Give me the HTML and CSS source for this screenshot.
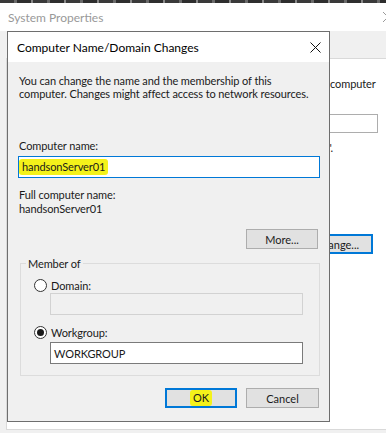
FILE: index.html
```html
<!DOCTYPE html>
<html lang="en">
<head>
  <meta charset="UTF-8">
  <title>Computer Name/Domain Changes</title>
  <link rel="stylesheet" href="styles.css">
</head>
<body>
  <div class="screen">
    <div class="top-strip"></div>

    <!-- background window -->
    <div class="sys-window">
      <div class="sys-titlebar">
        <span class="sys-title">System Properties</span>
        <svg class="sys-close" width="10" height="10" viewBox="0 0 10 10"><path d="M0 0L10 10M10 0L0 10" stroke="#9a9a9a" stroke-width="1"/></svg>
      </div>
      <div class="sys-tabs"></div>
      <div class="sys-panel">
        <p class="sys-text">computer</p>
        <div class="sys-input"></div>
        <p class="sys-note">"Mary's Computer".</p>
        <button class="btn btn-default sys-change">Change...</button>
      </div>
    </div>

    <!-- dialog on top -->
    <div class="dialog">
      <div class="dialog-titlebar">
        <span class="dialog-title">Computer Name/Domain Changes</span>
        <svg class="dialog-close" width="11" height="11" viewBox="0 0 11 11"><path d="M0.5 0.5L10.5 10.5M10.5 0.5L0.5 10.5" stroke="#111" stroke-width="1"/></svg>
      </div>
      <div class="dialog-body">
        <p class="intro">You can change the name and the membership of this computer. Changes might affect access to network resources.</p>

        <label class="field-label">Computer name:</label>
        <div class="textbox textbox-focus"><span class="hl">handsonServer01</span></div>

        <div class="full-name">
          <div>Full computer name:</div>
          <div>handsonServer01</div>
        </div>

        <div class="more-row">
          <button class="btn">More...</button>
        </div>

        <fieldset class="member-group">
          <legend>Member of</legend>
          <div class="radio-row">
            <span class="radio"></span>
            <span>Domain:</span>
          </div>
          <div class="textbox textbox-disabled group-box"></div>
          <div class="radio-row radio-row-2">
            <span class="radio radio-checked"></span>
            <span>Workgroup:</span>
          </div>
          <div class="textbox group-box group-box-2">WORKGROUP</div>
        </fieldset>

        <div class="dialog-buttons">
          <button class="btn btn-default"><span class="hl">OK</span></button>
          <button class="btn btn-cancel">Cancel</button>
        </div>
      </div>
    </div>
  </div>
</body>
</html>
```

FILE: styles.css
```css
* {
  box-sizing: border-box;
  margin: 0;
  padding: 0;
}

body {
  background: #f0f0f0;
  font-family: Lato, 'Noto Sans', sans-serif;
  font-size: 11px;
  letter-spacing: -0.1px;
  color: #1a1a1a;
  overflow: hidden;
}

.screen {
  position: relative;
  width: 386px;
  height: 433px;
  overflow: hidden;
}

.top-strip {
  height: 3px;
  background: repeating-linear-gradient(90deg, #3a3a3a 0 14px, #6a6a6a 14px 17px, #2e2e2e 17px 31px, #888 31px 33px);
}

/* background window */
.sys-titlebar {
  height: 28px;
  background: #fff;
  display: flex;
  align-items: center;
  justify-content: space-between;
  padding-left: 8px;
}

.sys-title {
  color: #999;
  font-size: 12px;
  letter-spacing: 0;
}

.sys-close {
  margin-right: -7px;
}

.sys-tabs {
  height: 27px;
}

.sys-panel {
  margin-left: 6px;
  width: 400px;
  height: 372px;
  background: #fff;
  border: 1px solid #d9d9d9;
  padding: 18px 0 0 323px;
  white-space: nowrap;
}

.sys-text {
  line-height: 13px;
}

.sys-input {
  margin: 24px 0 0 -102px;
  width: 150px;
  height: 19px;
  border: 1px solid #adadad;
  background: #fff;
}

.sys-note {
  margin: 8px 0 0 -100px;
  width: 103px;
  text-align: right;
  line-height: 13px;
}

.sys-change {
  margin: 80px 0 0 -29px;
  width: 75px;
  height: 19px;
}

/* dialog */
.dialog {
  position: absolute;
  left: 7px;
  top: 31px;
  width: 323px;
  height: 391px;
  border: 1px solid #6e6e6e;
  background: #f0f0f0;
  display: flex;
  flex-direction: column;
}

.dialog-titlebar {
  height: 30px;
  background: #fff;
  display: flex;
  align-items: center;
  justify-content: space-between;
  padding: 0 8px 0 9px;
}

.dialog-title {
  font-size: 12px;
  letter-spacing: 0;
  color: #000;
}

.dialog-body {
  padding: 12px 10px 0 11px;
  display: flex;
  flex-direction: column;
}

.intro {
  line-height: 13px;
}

.field-label {
  margin-top: 39px;
  line-height: 14px;
}

.textbox {
  height: 22px;
  border: 1px solid #7a7a7a;
  background: #fff;
  padding: 0 3px;
  display: flex;
  align-items: center;
}

.textbox-focus {
  margin: 3px -1px 0 -1px;
  border-color: #0078d7;
  padding-left: 0;
}

.textbox-disabled {
  background: #f0f0f0;
  border-color: #d2d2d2;
}

.hl {
  background: #f4f21a;
  border-radius: 3px;
  padding: 0 3px;
  line-height: 16px;
}

.full-name {
  margin-top: 10px;
  line-height: 14px;
}

.more-row {
  margin-top: 13px;
  display: flex;
  justify-content: flex-end;
  padding-right: 1px;
}

.btn {
  font-family: inherit;
  font-size: 11px;
  color: #1a1a1a;
  background: #e1e1e1;
  border: 1px solid #adadad;
  height: 20px;
  width: 72px;
  display: flex;
  align-items: center;
  justify-content: center;
}

.btn-default {
  border: 2px solid #0078d7;
}

.btn-cancel {
  width: 73px;
}

.member-group {
  margin: 8px -1px 0 1px;
  border: 1px solid #dcdcdc;
  padding: 0 0 11px 5px;
}

.member-group legend {
  padding: 0 2px;
  line-height: 13px;
}

.radio-row {
  margin: 8px 0 0 8px;
  height: 14px;
  display: flex;
  align-items: center;
  gap: 4px;
}

.radio-row-2 {
  margin-top: 10px;
}

.radio {
  width: 13px;
  height: 13px;
  border: 1px solid #333;
  border-radius: 50%;
  background: #fff;
  display: flex;
  align-items: center;
  justify-content: center;
}

.radio-checked::after {
  content: "";
  width: 7px;
  height: 7px;
  border-radius: 50%;
  background: #1a1a1a;
}

.group-box {
  margin: 1px 0 0 24px;
  width: 253px;
}

.group-box-2 {
  margin-top: 3px;
}

.dialog-buttons {
  margin-top: 12px;
  display: flex;
  justify-content: flex-end;
  gap: 9px;
}
```
